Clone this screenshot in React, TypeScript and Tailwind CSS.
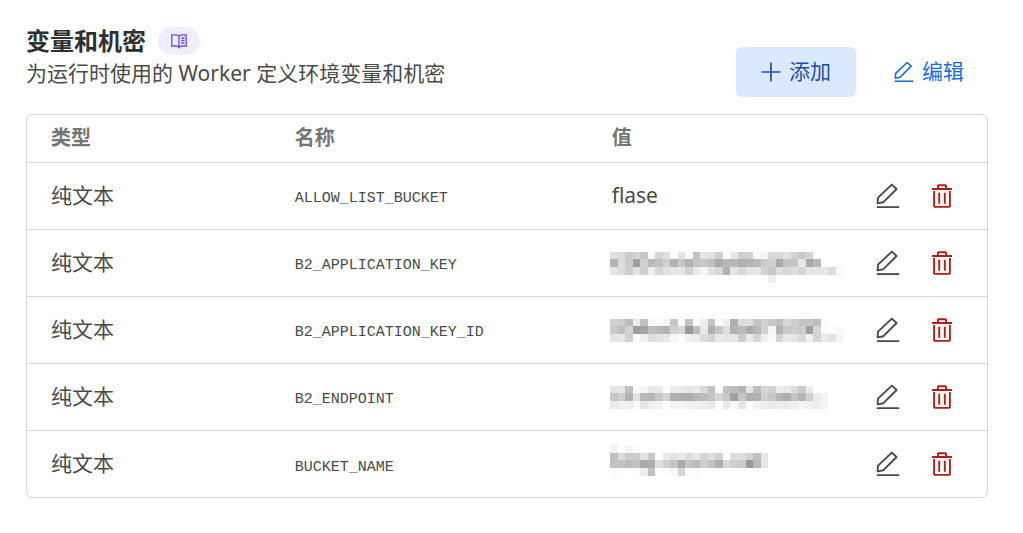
import React from "react";

type Variable = { type: string; name: string; value?: string; mask?: string[] };

// Each mask row is a run of two-digit grey levels, one per block.
const variables: Variable[] = [
  { type: "纯文本", name: "ALLOW_LIST_BUCKET", value: "flase" },
  {
    type: "纯文本",
    name: "B2_APPLICATION_KEY",
    mask: [
      "",
      "e0dccbd5c5fad5e0ffe3fac3e6e2cfffe6ced2f8f5d8d8e2d2c8d6",
      "b3ddcc9ed2b9c0cfb2c8b2c5c8c0acb8b8b0b3bbcbcfa8c4c5e8a8b8",
      "e4ddcfe1cfedd6e0e6e6d3e9f5e2d8b3e4d8e6e6d3c8dfd7dfd4e5e5e7ddfa",
      "ffffffffffffffffffffffffffffffffffffffffffef",
    ],
  },
  {
    type: "纯文本",
    name: "B2_APPLICATION_KEY_ID",
    mask: [
      "",
      "d0cebbecc0f8fcf7c6fdc3fdedc3fcefb0dcdec6d1c8c0d8cdc4c8bffd",
      "c9bed29da3bdb9b2d3d799bce8b1c6deb2bbaab8d0f4b3c7cecd9fd6fafcfc",
      "e4e8d0fdeedde3e7f5feefebddd3e8e5e8cdead5eef9d3e9e5d9f0d5ebe4f4",
    ],
  },
  {
    type: "纯文本",
    name: "B2_ENDPOINT",
    mask: [
      "",
      "e4e7c0fcf3e9e8fcecece6eadbc2ffc2bdb3e6bdd8d1ebe9dbc9ed",
      "c6ceb3e3b8b4c9d5aeaeadb7bdc4d6c8a0c7b0b2cfc7b6acc4b5d1ebf3",
      "eaf1eff9e5eff1fff3f3f0f0edeaffe9fae6fff3eee9eeeceff6f1eef3",
    ],
  },
  {
    type: "纯文本",
    name: "BUCKET_NAME",
    mask: [
      "f4fff4",
      "bfdccbcbe3c8ffeae1e9dde8d3dfd3ffdddcd3c0e6",
      "c2c2bbc2a9afe0cfc4abc5bccfc4b0d8cfcb98b9e6",
      "fdfdfffdeec2fffcf7d5fdfdffffffffffffffffff",
    ],
  },
];

function Mosaic({ rows }: { rows: string[] }) {
  return (
    <svg
      aria-hidden="true"
      viewBox="0 0 240 40"
      className="mt-0.5 -ml-0.5 block h-10 w-60"
      shapeRendering="crispEdges"
    >
      {rows.map((row, y) =>
        (row.match(/../g) ?? []).map((level, x) =>
          level === "ff" ? null : (
            <rect
              key={`${x}-${y}`}
              x={x * 7.53}
              y={y * 7.7}
              width={7.53}
              height={7.7}
              fill={`#${level}${level}${level}`}
            />
          ),
        ),
      )}
    </svg>
  );
}

function PencilIcon({ className }: { className: string }) {
  return (
    <svg viewBox="0 0 24 26" fill="none" stroke="currentColor" strokeWidth="1.9" className={className} aria-hidden="true">
      <path d="M15.8 1.6 20.6 6 7.4 19.2 1.6 20.4 2 14.6Z" strokeLinejoin="round" />
      <path d="M.8 24.1H23.2" />
    </svg>
  );
}

function TrashIcon() {
  return (
    <svg viewBox="0 0 22 26" fill="none" stroke="currentColor" strokeWidth="1.9" className="h-[26px] w-[22px]" aria-hidden="true">
      <path d="M1 6H21M6.9 6V3Q6.9 2.2 7.7 2.2H14.3Q15.1 2.2 15.1 3V6M3.1 8V22.9Q3.1 23.9 4.1 23.9H17.9Q18.9 23.9 18.9 22.9V8M8.2 9.8V20.8M13.8 9.8V20.8" />
    </svg>
  );
}

function PlusIcon() {
  return (
    <svg viewBox="0 0 20 20" fill="none" stroke="currentColor" strokeWidth="1.7" className="size-5" aria-hidden="true">
      <path d="M10 .5V19.5M.5 10H19.5" />
    </svg>
  );
}

function BookIcon() {
  return (
    <svg viewBox="0 0 18 16" fill="none" stroke="currentColor" strokeWidth="1.3" className="h-4 w-[18px]" aria-hidden="true">
      <path d="M9 3C8 2 7 1.8 5.5 1.8H1.8V13H6C7.5 13 8.4 13.4 9 14.6C9.6 13.4 10.5 13 12 13H16.2V1.8H12.5C11 1.8 10 2 9 3ZM9 3V14.6M11.2 5H14.5M11.2 7.5H14.5M11.2 10H14.5" />
    </svg>
  );
}

export default function App() {
  return (
    <main className="bg-white pt-[25px] pr-[35px] pb-9 pl-[26px] font-['Noto_Sans','Noto_Sans_CJK_SC',sans-serif] text-[21px] text-[#4a4a4a]">
      <header className="flex items-end justify-between">
        <div className="pb-2">
          <div className="flex items-center gap-3">
            <h1 className="text-2xl/8 font-bold text-[#2f2f2f]">变量和机密</h1>
            <a
              href="#docs"
              aria-label="文档"
              className="flex h-7 w-[42px] items-center justify-center rounded-full bg-[#f1ecfe] text-[#6650d2]"
            >
              <BookIcon />
            </a>
          </div>
          <p className="leading-8">为运行时使用的 Worker 定义环境变量和机密</p>
        </div>
        <div className="flex gap-3.5">
          <button type="button" className="flex h-[50px] items-center gap-2 rounded-md bg-[#dbe9fe] px-[25px] pb-px text-[#1d4fae]">
            <PlusIcon />
            添加
          </button>
          <button type="button" className="flex h-[50px] items-center gap-2 rounded-md px-6 pb-px text-[#1a6be0]">
            <PencilIcon className="h-[22px] w-5" />
            编辑
          </button>
        </div>
      </header>

      <div className="mt-[17px] overflow-hidden rounded-md border border-[#d6d6d6]">
        <table className="w-full table-fixed border-collapse text-left">
          <thead>
            <tr className="h-[47px] text-xl text-[#757575]">
              <th scope="col" className="w-[25.4%] px-6 py-0 font-bold">类型</th>
              <th scope="col" className="w-[33%] px-6 py-0 font-bold">名称</th>
              <th scope="col" className="px-6 py-0 font-bold">值</th>
              <td className="w-36" />
            </tr>
          </thead>
          <tbody>
            {variables.map((item) => (
              <tr key={item.name} className="h-[67px] border-t border-[#d6d6d6]">
                <td className="px-6 py-0">{item.type}</td>
                <td className="px-6 pt-2 pb-0 font-['Liberation_Mono',monospace] text-[15px]">{item.name}</td>
                <td className="px-6 py-0">{item.mask ? <Mosaic rows={item.mask} /> : item.value}</td>
                <td className="py-0 pr-[34px]">
                  <div className="flex items-center justify-end gap-[31px]">
                    <button type="button" aria-label={`编辑 ${item.name}`}>
                      <PencilIcon className="h-[26px] w-6" />
                    </button>
                    <button type="button" aria-label={`删除 ${item.name}`} className="text-[#ad1f16]">
                      <TrashIcon />
                    </button>
                  </div>
                </td>
              </tr>
            ))}
          </tbody>
        </table>
      </div>
    </main>
  );
}
